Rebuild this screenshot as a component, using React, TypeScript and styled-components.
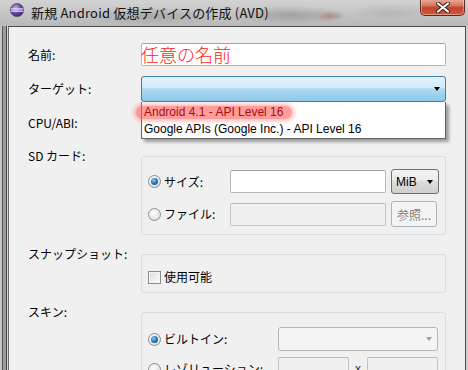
import styled, { createGlobalStyle } from 'styled-components';

const GlobalStyle = createGlobalStyle`
  html, body {
    margin: 0;
    padding: 0;
    width: 468px;
    height: 370px;
    overflow: hidden;
    background: #bdbdbd;
  }
  body {
    font-family: "Liberation Sans", "Noto Sans CJK JP", sans-serif;
    font-size: 12px;
    color: #000;
  }
`;

const Window = styled.div`
  width: 468px;
  height: 370px;
  display: flex;
  flex-direction: column;
  overflow: hidden;
`;

const TitleBar = styled.div`
  height: 26px;
  flex: none;
  display: flex;
  align-items: flex-start;
  padding-left: 10px;
  background:
    radial-gradient(ellipse 14px 5px at 330px 16px, rgba(175, 80, 70, 0.45), transparent),
    radial-gradient(ellipse 70px 9px at 150px 16px, rgba(110, 110, 110, 0.3), transparent),
    radial-gradient(ellipse 60px 9px at 290px 15px, rgba(100, 100, 100, 0.35), transparent),
    radial-gradient(ellipse 40px 8px at 390px 12px, rgba(150, 150, 150, 0.3), transparent),
    linear-gradient(to bottom, #d2d2d2, #c2c2c2 60%, #b9b9b9);
`;

const AppIcon = styled.svg`
  width: 14px;
  height: 14px;
  margin-top: 3px;
  flex: none;
`;

const TitleText = styled.div`
  margin-left: 7px;
  margin-top: 4px;
  font-family: "Noto Sans CJK JP", sans-serif;
  font-size: 13px;
  line-height: 17px;
  letter-spacing: 0.2px;
  color: #111;
  white-space: nowrap;
`;

const Spacer = styled.div`
  flex: 1;
`;

const CloseButton = styled.div`
  width: 45px;
  height: 17px;
  margin-right: 3px;
  margin-top: -1px;
  box-sizing: border-box;
  border: 1px solid #5c2a22;
  border-top: none;
  border-radius: 0 0 5px 5px;
  background: linear-gradient(to bottom, #eab0a0 0%, #d8775f 40%, #c2432c 55%, #cf5a3c 100%);
  box-shadow: inset 0 0 0 1px rgba(255, 220, 210, 0.45);
  display: flex;
  align-items: center;
  justify-content: center;
`;

const Body = styled.div`
  flex: 1;
  display: flex;
  min-height: 0;
`;

const LeftFrame = styled.div`
  width: 8px;
  flex: none;
  background: linear-gradient(
    to right,
    #c4c4c4 0 2px,
    #5a5a5a 2px 3px,
    #9c9c9c 3px 6px,
    #454545 6px 7px,
    #d8d8d8 7px 8px
  );
`;

const RightFrame = styled.div`
  width: 2px;
  flex: none;
  background: #cfcfcf;
`;

const Content = styled.div`
  flex: 1;
  background: #f0f0f0;
  border-top: 1px solid #4a4a4a;
  border-left: 1px solid #6a6a6a;
  border-right: 1px solid #4a4a4a;
  padding: 16px 19px 0 19px;
  display: flex;
  flex-direction: column;
`;

const Row = styled.div<{ $gap: number }>`
  display: grid;
  grid-template-columns: 113px 305px;
  margin-top: ${(p) => p.$gap}px;
  flex: none;
`;

const Label = styled.div<{ $group?: boolean }>`
  font-family: "Noto Sans CJK JP", sans-serif;
  font-size: 12px;
  line-height: 16px;
  white-space: nowrap;
  align-self: ${(p) => (p.$group ? 'start' : 'center')};
  margin-top: ${(p) => (p.$group ? '-8px' : '0')};
`;

const Cell = styled.div`
  position: relative;
`;

const TextField = styled.div<{ $disabled?: boolean; $h?: number }>`
  box-sizing: border-box;
  height: ${(p) => p.$h ?? 23}px;
  border: 1px solid ${(p) => (p.$disabled ? '#c2c4c6' : '#b3b8be')};
  border-top-color: ${(p) => (p.$disabled ? '#b8babc' : '#9ea3a9')};
  border-radius: 2px;
  background: ${(p) => (p.$disabled ? '#f0f0f0' : '#fff')};
  display: flex;
  align-items: center;
  overflow: visible;
`;

const NameValue = styled.span`
  font-family: "Noto Sans CJK JP", sans-serif;
  font-size: 18px;
  font-weight: 300;
  line-height: 20px;
  color: #ff1a1a;
  margin-left: -1px;
  margin-top: -2px;
`;

const Combo = styled.div<{ $variant: 'hot' | 'plain' | 'disabled'; $h: number }>`
  box-sizing: border-box;
  height: ${(p) => p.$h}px;
  border-radius: 3px;
  border: 1px solid
    ${(p) => (p.$variant === 'hot' ? '#3c7fb1' : p.$variant === 'disabled' ? '#b5b5b5' : '#707070')};
  background: ${(p) =>
    p.$variant === 'hot'
      ? 'linear-gradient(to bottom, #e4f3fc 0%, #cfe9f8 45%, #aedaf3 50%, #8dc8ea 100%)'
      : p.$variant === 'disabled'
        ? '#f4f4f4'
        : 'linear-gradient(to bottom, #f2f2f2 0%, #ebebeb 45%, #dddddd 50%, #cfcfcf 100%)'};
  display: flex;
  align-items: center;
  padding: 0 4px;
  gap: 4px;
`;

const ComboText = styled.span`
  flex: 1;
  font-size: 12px;
  line-height: 14px;
`;

const Arrow = styled.span<{ $grey?: boolean }>`
  width: 0;
  height: 0;
  border-left: 3.5px solid transparent;
  border-right: 3.5px solid transparent;
  border-top: 4px solid ${(p) => (p.$grey ? '#a0a0a0' : '#000')};
  margin-right: 1px;
`;

const DropList = styled.div`
  position: absolute;
  top: 100%;
  left: 0;
  width: 305px;
  box-sizing: border-box;
  padding: 2px 0 0;
  height: 37px;
  background: #fff;
  border: 1px solid #646464;
  border-top: none;
  box-shadow: 3px 3px 3px rgba(0, 0, 0, 0.35);
  z-index: 2;
`;

const DropItem = styled.div`
  height: 17px;
  line-height: 17px;
  padding-left: 2px;
  font-size: 12px;
  white-space: nowrap;
`;

const Highlight = styled.span`
  display: inline-block;
  margin-left: -8px;
  padding: 0 9px 0 8px;
  line-height: 13px;
  border-radius: 7px;
  color: #a80d0d;
  background: rgba(255, 90, 90, 0.6);
  box-shadow: 0 0 4px 2px rgba(255, 90, 90, 0.45);
`;

const Group = styled.div<{ $pad: string }>`
  box-sizing: border-box;
  border: 1px solid #d5dfe5;
  border-radius: 3px;
  padding: ${(p) => p.$pad};
`;

const GroupGrid = styled.div<{ $cols: string; $rowGap: number }>`
  display: grid;
  grid-template-columns: ${(p) => p.$cols};
  column-gap: 5px;
  row-gap: ${(p) => p.$rowGap}px;
  align-items: center;
`;

const Choice = styled.label`
  display: flex;
  align-items: center;
  gap: 3px;
  font-family: "Noto Sans CJK JP", sans-serif;
  font-size: 12px;
  line-height: 16px;
  white-space: nowrap;
`;

const Radio = styled.span<{ $on?: boolean }>`
  width: 13px;
  height: 13px;
  box-sizing: border-box;
  border-radius: 50%;
  border: 1px solid #8a8c8e;
  background: radial-gradient(circle at 40% 35%, #ffffff 0%, #e6e6e6 60%, #cfcfcf 100%);
  display: flex;
  align-items: center;
  justify-content: center;
  flex: none;
  &::after {
    content: '';
    display: ${(p) => (p.$on ? 'block' : 'none')};
    width: 7px;
    height: 7px;
    border-radius: 50%;
    background: radial-gradient(circle at 40% 35%, #8fd1f5 0%, #2a7ab8 45%, #0d3f6e 100%);
  }
`;

const Check = styled.span`
  width: 13px;
  height: 13px;
  box-sizing: border-box;
  border: 1px solid #8a8c8e;
  background: linear-gradient(135deg, #dcdcdc 0%, #f4f4f4 70%, #ffffff 100%);
  box-shadow: inset 0 0 0 1px #f6f6f6;
  flex: none;
`;

const Button = styled.div<{ $disabled?: boolean }>`
  box-sizing: border-box;
  height: 26px;
  width: 46px;
  border: 1px solid #adb2b5;
  border-radius: 3px;
  background: #f4f4f4;
  color: #838383;
  font-family: "Noto Sans CJK JP", sans-serif;
  font-size: 12px;
  display: flex;
  align-items: center;
  justify-content: center;
`;

const SizeRow = styled.div`
  display: flex;
  align-items: center;
`;

const Times = styled.span`
  width: 18px;
  text-align: center;
  font-size: 12px;
  color: #333;
`;

export default function App() {
  return (
    <>
      <GlobalStyle />
      <Window>
        <TitleBar>
          <AppIcon viewBox="0 0 14 14">
            <defs>
              <radialGradient id="ecl" cx="40%" cy="35%" r="70%">
                <stop offset="0%" stopColor="#c2b0e4" />
                <stop offset="55%" stopColor="#6a48a8" />
                <stop offset="100%" stopColor="#3a2070" />
              </radialGradient>
            </defs>
            <circle cx="7" cy="7" r="6.6" fill="url(#ecl)" stroke="#4a3a6a" strokeWidth="0.6" />
            <rect x="0.8" y="5.4" width="12.4" height="1.1" fill="#f4f0fb" />
            <rect x="0.8" y="7.6" width="12.4" height="1.1" fill="#f4f0fb" />
          </AppIcon>
          <TitleText>新規 Android 仮想デバイスの作成 (AVD)</TitleText>
          <Spacer />
          <CloseButton>
            <svg width="14" height="11" viewBox="0 0 14 11">
              <path d="M2 1.5 L12 9.5 M12 1.5 L2 9.5" stroke="#3a1a14" strokeWidth="4" strokeLinecap="round" />
              <path d="M2 1.5 L12 9.5 M12 1.5 L2 9.5" stroke="#ffffff" strokeWidth="2.2" strokeLinecap="round" />
            </svg>
          </CloseButton>
        </TitleBar>
        <Body>
          <LeftFrame />
          <Content>
            <Row $gap={0}>
              <Label>名前:</Label>
              <TextField>
                <NameValue>任意の名前</NameValue>
              </TextField>
            </Row>
            <Row $gap={10}>
              <Label>ターゲット:</Label>
              <Cell>
                <Combo $variant="hot" $h={26}>
                  <ComboText />
                  <Arrow />
                </Combo>
                <DropList>
                  <DropItem>
                    <Highlight>Android 4.1 - API Level 16</Highlight>
                  </DropItem>
                  <DropItem>Google APIs (Google Inc.) - API Level 16</DropItem>
                </DropList>
              </Cell>
            </Row>
            <Row $gap={9}>
              <Label>CPU/ABI:</Label>
              <Combo $variant="disabled" $h={24}>
                <ComboText />
                <Arrow $grey />
              </Combo>
            </Row>
            <Row $gap={21}>
              <Label $group>SD カード:</Label>
              <Group $pad="12px 6px 7px 6px">
                <GroupGrid $cols="77px 156px 48px" $rowGap={7}>
                  <Choice>
                    <Radio $on />
                    サイズ:
                  </Choice>
                  <TextField />
                  <Combo $variant="plain" $h={25}>
                    <ComboText>MiB</ComboText>
                    <Arrow />
                  </Combo>
                  <Choice>
                    <Radio />
                    ファイル:
                  </Choice>
                  <TextField $disabled />
                  <Button $disabled>参照...</Button>
                </GroupGrid>
              </Group>
            </Row>
            <Row $gap={19}>
              <Label $group>スナップショット:</Label>
              <Group $pad="14px 6px 7px 6px">
                <Choice>
                  <Check />
                  使用可能
                </Choice>
              </Group>
            </Row>
            <Row $gap={19}>
              <Label $group>スキン:</Label>
              <Group $pad="14px 6px 20px 6px">
                <GroupGrid $cols="125px 160px" $rowGap={6}>
                  <Choice>
                    <Radio $on />
                    ビルトイン:
                  </Choice>
                  <Combo $variant="disabled" $h={24}>
                    <ComboText />
                    <Arrow $grey />
                  </Combo>
                  <Choice>
                    <Radio />
                    レゾリューション:
                  </Choice>
                  <SizeRow>
                    <TextField $disabled $h={24} style={{ width: 71 }} />
                    <Times>x</Times>
                    <TextField $disabled $h={24} style={{ width: 71 }} />
                  </SizeRow>
                </GroupGrid>
              </Group>
            </Row>
          </Content>
          <RightFrame />
        </Body>
      </Window>
    </>
  );
}
